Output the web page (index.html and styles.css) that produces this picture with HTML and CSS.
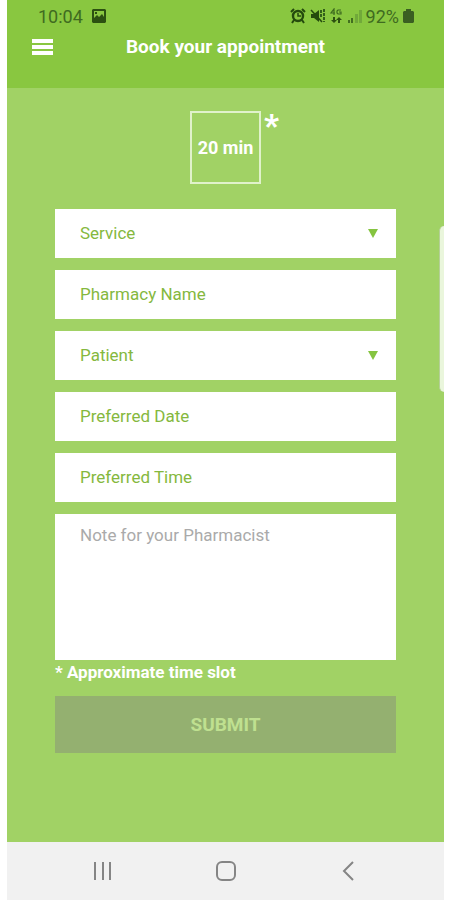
FILE: index.html
```html
<!DOCTYPE html>
<html lang="en">
<head>
  <meta charset="UTF-8" />
  <meta name="viewport" content="width=device-width, initial-scale=1.0" />
  <title>Book your appointment</title>
  <link rel="stylesheet" href="styles.css">
</head>
<body>
  <div class="screen">
    <header class="header">
      <div class="status-bar">
        <span>10:04</span>
        <svg class="picture-icon" width="14" height="14" viewBox="0 0 14 14">
          <path fill="#2c5011" fill-rule="evenodd" d="M1 0h12l1 1v12l-1 1H1l-1-1V1zM2 2v7l3-3 2 2 3-3 2 3V2zM3 3h2v2H3z"/>
        </svg>
        <div class="status-right">
          <svg width="16" height="16" viewBox="0 0 16 16" fill="none" stroke="#244a0d">
            <circle cx="8" cy="8" r="5" stroke-width="2.4"/>
            <path stroke-width="2" d="M1 4l3-3M12 1l3 3M4 12l-2 3M12 12l2 3"/>
            <path stroke-width="1.5" d="M8 5v3h3"/>
          </svg>
          <svg width="16" height="16" viewBox="0 0 16 16">
            <path fill="#244a0d" d="M1 6h3l5-4v12l-5-4H1z"/>
            <path fill="none" stroke="#244a0d" stroke-width="1.6" d="M1 2l11 12"/>
            <path fill="none" stroke="#33601a" stroke-width="2" stroke-dasharray="3 1" d="M11 2v8M14 1v13"/>
          </svg>
          <svg class="network-icon" width="12" height="16" viewBox="0 0 12 16">
            <path fill="none" stroke="#3d6a1e" stroke-width="1.2" d="M4 7V1L1 5h4M11 2H8L7 3v2l1 1h3V4H9"/>
            <path fill="#2c5011" d="M3 9h2v3h2l-3 3-3-3h2zM8 15v-3H6l3-3 3 3h-2v3z"/>
          </svg>
          <svg width="14" height="16" viewBox="0 0 14 16">
            <path fill="#426f20" d="M0 12h2v3H0zM3 10h2v5H3z"/>
            <path fill="#71a93a" d="M7 6h3v9H7zM11 2h3v13h-3z"/>
          </svg>
          <span>92%</span>
          <svg width="11" height="14" viewBox="0 0 11 14">
            <path fill="#3a5f22" d="M3 0h5v2h2l1 1v10l-1 1H1l-1-1V3l1-1h2z"/>
          </svg>
        </div>
      </div>
      <div class="title-bar">
        <button class="menu-btn" type="button" aria-label="Menu">
          <svg width="21" height="16" viewBox="0 0 21 16">
            <path fill="#fff" d="M0 0h21v4H0zM0 6h21v4H0zM0 12h21v4H0z"/>
          </svg>
        </button>
        <h1>Book your appointment</h1>
      </div>
    </header>

    <main class="content">
      <div class="duration">20 min<span class="star">*</span></div>

      <form class="form">
        <div class="select-box">
          <select class="field" id="service" aria-label="Service">
            <option>Service</option>
          </select>
          <svg class="arrow" width="10" height="9" viewBox="0 0 10 9"><path fill="#85c440" d="M0 0h10L5 9z"/></svg>
        </div>
        <input class="field" type="text" id="pharmacy" placeholder="Pharmacy Name" aria-label="Pharmacy Name" />
        <div class="select-box">
          <select class="field" id="patient" aria-label="Patient">
            <option>Patient</option>
          </select>
          <svg class="arrow" width="10" height="9" viewBox="0 0 10 9"><path fill="#85c440" d="M0 0h10L5 9z"/></svg>
        </div>
        <input class="field" type="text" id="date" placeholder="Preferred Date" aria-label="Preferred Date" />
        <input class="field" type="text" id="time" placeholder="Preferred Time" aria-label="Preferred Time" />
        <textarea class="field note" id="note" placeholder="Note for your Pharmacist" aria-label="Note for your Pharmacist"></textarea>
        <p class="hint">* Approximate time slot</p>
        <button class="submit-btn" type="submit" disabled>SUBMIT</button>
      </form>
      <div class="edge-handle"></div>
    </main>

    <nav class="nav-bar">
      <button type="button" aria-label="Recent apps">
        <svg width="20" height="20" viewBox="0 0 20 20" fill="none" stroke="#858585" stroke-width="2">
          <path d="M2 1v18M10 1v18M17 1v18"/>
        </svg>
      </button>
      <button type="button" aria-label="Home">
        <svg width="20" height="20" viewBox="0 0 20 20" fill="none" stroke="#858585" stroke-width="2">
          <rect x="1" y="1" width="18" height="18" rx="5"/>
        </svg>
      </button>
      <button type="button" aria-label="Back">
        <svg width="20" height="20" viewBox="0 0 20 20" fill="none" stroke="#858585" stroke-width="2">
          <path d="M15 1l-9 9 9 9"/>
        </svg>
      </button>
    </nav>
  </div>
</body>
</html>
```

FILE: styles.css
```css
* {
  box-sizing: border-box;
}
body {
  margin: 0;
  background: #fff;
  font-family: Roboto, "Liberation Sans", sans-serif;
}
button {
  padding: 0;
  border: none;
  background: none;
  cursor: pointer;
}
svg {
  display: block;
}
.screen {
  display: flex;
  flex-direction: column;
  min-height: 100vh;
  margin: 0 6px 0 7px;
  background-color: #a1d265;
}
.header {
  height: 88px;
  background-color: #89c740;
}
.status-bar {
  display: flex;
  align-items: center;
  height: 32px;
  padding: 0 30px 0 31px;
  font-size: 18px;
  color: #3f6b20;
}
.picture-icon {
  margin-left: 9px;
}
.status-right {
  display: flex;
  align-items: center;
  gap: 4px;
  margin-left: auto;
}
.network-icon {
  margin-right: 2px;
}
.title-bar {
  display: grid;
  grid-template-columns: 1fr auto 1fr;
  align-items: center;
  height: 30px;
  padding: 0 25px;
}
.menu-btn {
  justify-self: start;
}
h1 {
  margin: 0;
  font-size: 19px;
  line-height: 24px;
  font-weight: bold;
  color: #fff;
}
.content {
  position: relative;
  flex: 1;
  padding: 23px 48px;
}
.duration {
  position: relative;
  width: 71px;
  height: 73px;
  margin: 0 auto 25px;
  border: 2px solid #e0f2cb;
  font-size: 18px;
  line-height: 69px;
  font-weight: bold;
  text-align: center;
  white-space: nowrap;
  color: #fff;
}
.star {
  position: absolute;
  top: -4px;
  left: 72px;
  font-size: 32px;
  line-height: 32px;
  font-weight: 900;
}
.form {
  display: flex;
  flex-direction: column;
  gap: 12px;
}
.select-box {
  position: relative;
}
.field {
  display: block;
  width: 100%;
  height: 49px;
  padding: 0 25px 2px;
  border: none;
  border-radius: 0;
  outline: none;
  background-color: #fff;
  font-family: inherit;
  font-size: 17px;
  color: #85b83e;
  appearance: none;
}
.field::placeholder {
  color: #85b83e;
  opacity: 1;
}
.arrow {
  position: absolute;
  top: 20px;
  right: 18px;
  pointer-events: none;
}
.note {
  height: 146px;
  padding: 11px 25px;
  line-height: 20px;
  resize: none;
}
.note::placeholder {
  color: #aaa;
}
.hint {
  margin: -12px 0 0;
  font-size: 17px;
  line-height: 24px;
  font-weight: bold;
  color: #fff;
}
.submit-btn {
  height: 57px;
  background-color: #94b070;
  font-family: inherit;
  font-size: 19px;
  font-weight: bold;
  color: #bfe090;
}
.edge-handle {
  position: absolute;
  top: 138px;
  right: 0;
  width: 5px;
  height: 166px;
  border-left: 1px solid #b5cf98;
  border-radius: 5px 0 0 5px;
  background-color: #eaf6dc;
}
.nav-bar {
  display: flex;
  justify-content: space-between;
  align-items: center;
  height: 58px;
  padding: 0 86px;
  background-color: #f1f1f1;
}
```
